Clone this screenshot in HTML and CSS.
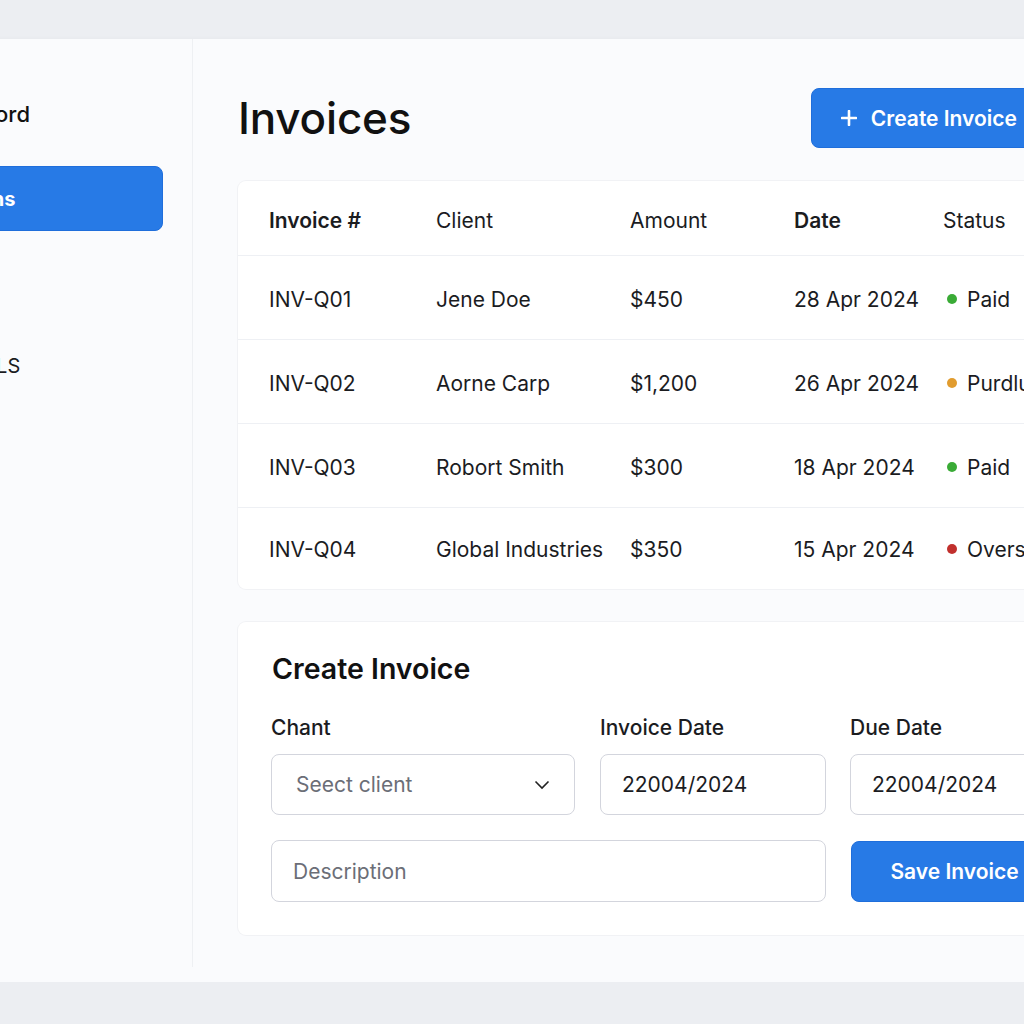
FILE: index.html
```html
<!DOCTYPE html>
<html lang="en">
<head>
  <meta charset="UTF-8">
  <title>Invoices</title>
  <link rel="stylesheet" href="styles.css">
</head>
<body>

<div class="app">
  <!-- sidebar -->
  <aside class="sidebar">
    <div class="brand">Dashbord</div>
    <nav class="nav">
      <a class="nav-item active">Transactions</a>
      <a class="nav-item">Estimates</a>
      <a class="nav-item">EMAIL TOOLS</a>
    </nav>
  </aside>

  <!-- main -->
  <main class="main">
    <div class="page-head">
      <h1>Invoices</h1>
      <button class="btn btn-create">
        <svg width="16" height="16" viewBox="0 0 16 16"><path d="M8 1v14M1 8h14" stroke="#fff" stroke-width="2.6" stroke-linecap="round"/></svg>
        Create Invoice
      </button>
    </div>

    <!-- invoice list -->
    <section class="card table-card">
      <div class="row head">
        <div class="strong">Invoice #</div>
        <div>Client</div>
        <div>Amount</div>
        <div class="strong">Date</div>
        <div>Status</div>
      </div>
      <div class="row">
        <div>INV-Q01</div>
        <div>Jene Doe</div>
        <div>$450</div>
        <div>28 Apr 2024</div>
        <div class="status"><span class="dot green"></span>Paid</div>
      </div>
      <div class="row">
        <div>INV-Q02</div>
        <div>Aorne Carp</div>
        <div>$1,200</div>
        <div>26 Apr 2024</div>
        <div class="status"><span class="dot orange"></span>Purdlue</div>
      </div>
      <div class="row">
        <div>INV-Q03</div>
        <div>Robort Smith</div>
        <div>$300</div>
        <div>18 Apr 2024</div>
        <div class="status"><span class="dot green"></span>Paid</div>
      </div>
      <div class="row">
        <div>INV-Q04</div>
        <div>Global Industries</div>
        <div>$350</div>
        <div>15 Apr 2024</div>
        <div class="status"><span class="dot red"></span>Overseen</div>
      </div>
    </section>

    <!-- create form -->
    <section class="card form-card">
      <h2>Create Invoice</h2>
      <div class="form-grid">
        <div class="field">
          <label>Chant</label>
          <div class="input select">
            <span class="placeholder">Seect client</span>
            <svg width="16" height="10" viewBox="0 0 16 10"><path d="M1.5 1.5l6.5 6.5 6.5-6.5" fill="none" stroke="#222" stroke-width="1.6"/></svg>
          </div>
        </div>
        <div class="field">
          <label>Invoice Date</label>
          <div class="input">22004/2024</div>
        </div>
        <div class="field">
          <label>Due Date</label>
          <div class="input">22004/2024</div>
        </div>
        <div class="input desc"><span class="placeholder">Description</span></div>
        <button class="btn btn-save">Save Invoice</button>
      </div>
    </section>
  </main>
</div>

</body>
</html>
```

FILE: styles.css
```css
body {
  margin: 0; background: #eceef2; overflow: hidden;
  font-family: Inter, "Noto Sans", sans-serif; color: #1b1c1f;
}

.app {
  display: flex; margin: 39px 0 0 -80px; width: 1217px; height: 943px;
  background: #fafbfd; box-shadow: 0 2px 6px rgba(0, 0, 0, 0.07);
}

/* sidebar */
.sidebar {
  flex-shrink: 0; box-sizing: border-box; width: 273px; margin-bottom: 15px;
  padding: 60px 29px 0 0; border-right: 1px solid #eef0f3;
}
.brand { padding-left: 8px; font-size: 22px; font-weight: 500; line-height: 30px; color: #111; }
.nav { display: flex; flex-direction: column; margin: 37px 0 0 -37px; }
.nav-item {
  display: flex; align-items: center; box-sizing: border-box; height: 76px; padding-left: 4px;
  font-size: 20px; color: #1b1c1f; white-space: nowrap;
}
.nav-item.active {
  height: 65px; margin-bottom: 21px; border-radius: 8px;
  background: #277ae6; border: 1px solid #1f6edb; color: #fff; font-weight: 700;
}

/* main */
.main { flex: 1; padding: 49px 45px 0; }
.page-head { display: flex; align-items: center; justify-content: space-between; height: 60px; margin-bottom: 33px; padding-right: 46px; }
h1 { margin: 0; font-size: 44px; font-weight: 500; color: #111; letter-spacing: -0.2px; }

.btn {
  display: flex; align-items: center; justify-content: center; gap: 14px;
  border: 1px solid #1f6edb; border-radius: 8px; background: #277ae6;
  color: #fff; font-family: inherit; font-size: 21px; font-weight: 600; cursor: pointer;
}
.btn-create { height: 60px; padding: 0 28px 0 29px; }

.card { background: #fff; border-radius: 8px; box-shadow: 0 0 0 1px #f1f2f5; }

/* table */
.table-card { margin-bottom: 33px; }
.row {
  display: grid; grid-template-columns: 167px 194px 164px 149px 1fr;
  align-items: center; height: 80px; padding: 3px 0 0 31px;
  border-bottom: 1px solid #eef0f4; font-size: 21px;
}
.row:last-child { height: 80px; padding-top: 1px; border-bottom: none; }
.row.head { height: 75px; padding-top: 5px; box-sizing: border-box; }
.strong { font-weight: 600; }
.status { display: flex; align-items: center; gap: 10px; margin-left: 4px; }
.dot { width: 10px; height: 10px; border-radius: 50%; }
.green { background: #3aab36; }
.orange { background: #e19c2f; }
.red { background: #c1302d; }

/* form */
.form-card { padding: 30px 34px 33px 33px; }
h2 { margin: 0 0 30px 1px; font-size: 28.5px; font-weight: 600; line-height: 34px; color: #111; }
.form-grid { display: grid; grid-template-columns: 304px 226px 1fr; column-gap: 25px; row-gap: 25px; }
.form-grid > :nth-child(3) { margin-left: -1px; }
.field { display: flex; flex-direction: column; gap: 14px; }
label { font-size: 21px; font-weight: 500; line-height: 24px; color: #1b1c1f; }
.input {
  display: flex; align-items: center; justify-content: space-between;
  box-sizing: border-box; height: 61px; padding: 0 24px 0 21px;
  border: 1px solid #d3d5dd; border-radius: 8px; background: #fff; font-size: 21px;
}
.select { padding-left: 24px; }
.placeholder { color: #6b6e77; }
.desc { grid-column: 1 / 3; height: 62px; }
.btn-save { height: 61px; margin-top: 1px; padding: 0; }
```
